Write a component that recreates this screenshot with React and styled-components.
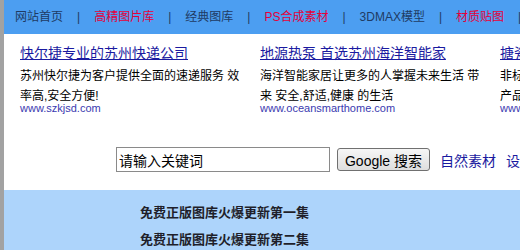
import React from "react";
import styled, { createGlobalStyle } from "styled-components";

const GlobalStyle = createGlobalStyle`
  body {
    margin: 0;
    background: #ffffff;
    font-family: "Liberation Sans", "Noto Sans CJK SC", sans-serif;
  }
`;

const Page = styled.div`
  border-left: 4px solid #a2a2a2;
  min-height: 250px;
  overflow: hidden;
`;

const Nav = styled.div`
  height: 34px;
  background: #4c9ef1;
  display: flex;
  align-items: center;
  gap: 14px;
  padding-left: 11px;
  white-space: nowrap;
  font-size: 12px;
  overflow: hidden;
`;

const NavItem = styled.a`
  flex-shrink: 0;
  color: ${(p) => (p.$hot ? "#e4003a" : "#1f3b63")};
  text-decoration: none;
  line-height: 16px;
`;

const Sep = styled.span`
  flex-shrink: 0;
  color: #1f3b63;
  font-size: 12px;
`;

const Ads = styled.div`
  display: grid;
  grid-template-columns: repeat(3, 230px);
  column-gap: 10px;
  padding: 9px 0 0 16px;
  height: 108px;
  box-sizing: border-box;
`;

const Ad = styled.div`
  display: flex;
  flex-direction: column;
`;

const AdTitle = styled.a`
  font-size: 14px;
  line-height: 20px;
  color: #1a1aa0;
  text-decoration: underline;
  white-space: nowrap;
`;

const AdDesc = styled.div`
  font-size: 12px;
  line-height: 20px;
  color: #000;
  margin-top: 3px;
`;

const AdUrl = styled.div`
  font-size: 11px;
  line-height: 14px;
  color: #3a3ab0;
  margin-top: -5px;
  white-space: nowrap;
`;

const Search = styled.div`
  display: flex;
  align-items: center;
  padding: 5px 0 0 112px;
  height: 25px;
  white-space: nowrap;
  overflow: hidden;
`;

const Input = styled.input`
  flex-shrink: 0;
  width: 214px;
  height: 25px;
  box-sizing: border-box;
  border: 1px solid #8a8a8a;
  padding: 0 2px;
  font-size: 14px;
  font-family: "Liberation Sans", "Noto Sans CJK SC", sans-serif;
  color: #000;
  outline: none;
`;

const Button = styled.button`
  flex-shrink: 0;
  margin-left: 7px;
  height: 23px;
  width: 93px;
  padding: 0;
  border: 1px solid #707070;
  border-radius: 3px;
  background: linear-gradient(#f6f6f6, #dedede);
  font-size: 14px;
  font-family: "Liberation Sans", "Noto Sans CJK SC", sans-serif;
  color: #000;
`;

const Link = styled.a`
  flex-shrink: 0;
  margin-left: 10px;
  font-size: 14px;
  color: #1a1aa0;
  text-decoration: none;
`;

const News = styled.div`
  margin-top: 18px;
  background: #add4fb;
  padding: 9px 0 0 136px;
  height: 60px;
`;

const NewsItem = styled.div`
  font-size: 13px;
  font-weight: bold;
  line-height: 27px;
  color: #1f1f2a;
`;

const navItems = [
  { text: "网站首页" },
  { text: "高精图片库", hot: true },
  { text: "经典图库" },
  { text: "PS合成素材", hot: true },
  { text: "3DMAX模型" },
  { text: "材质贴图", hot: true },
];

const ads = [
  {
    title: "快尔捷专业的苏州快递公司",
    desc: "苏州快尔捷为客户提供全面的速递服务 效率高,安全方便!",
    url: "www.szkjsd.com",
  },
  {
    title: "地源热泵 首选苏州海洋智能家",
    desc: "海洋智能家居让更多的人掌握未来生活 带来 安全,舒适,健康 的生活",
    url: "www.oceansmarthome.com",
  },
  {
    title: "搪瓷钢板 苏州搪瓷",
    desc: "非标搪瓷设备专业制造商欢迎各界来电选购 产品质量可靠",
    url: "www.szsuzhou.com",
  },
];

export default function App() {
  return (
    <Page>
      <GlobalStyle />
      <Nav>
        {navItems.map((item) => (
          <React.Fragment key={item.text}>
            <NavItem $hot={item.hot}>{item.text}</NavItem>
            <Sep>|</Sep>
          </React.Fragment>
        ))}
      </Nav>
      <Ads>
        {ads.map((ad) => (
          <Ad key={ad.url}>
            <AdTitle>{ad.title}</AdTitle>
            <AdDesc>{ad.desc}</AdDesc>
            <AdUrl>{ad.url}</AdUrl>
          </Ad>
        ))}
      </Ads>
      <Search>
        <Input defaultValue="请输入关键词" />
        <Button>Google 搜索</Button>
        <Link>自然素材</Link>
        <Link>设计素材</Link>
      </Search>
      <News>
        <NewsItem>免费正版图库火爆更新第一集</NewsItem>
        <NewsItem>免费正版图库火爆更新第二集</NewsItem>
      </News>
    </Page>
  );
}
